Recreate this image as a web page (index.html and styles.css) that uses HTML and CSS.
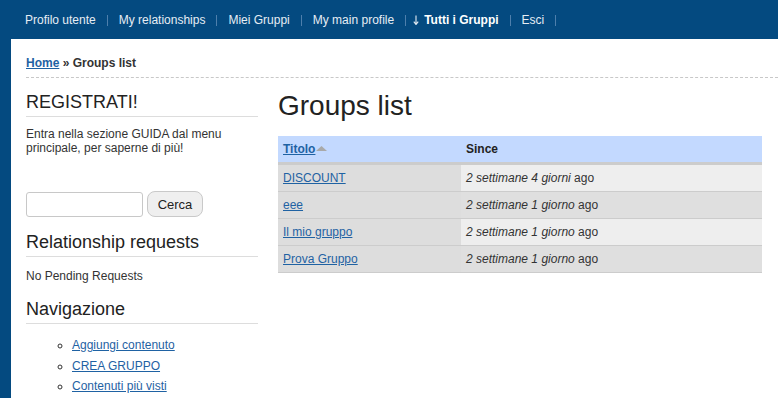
FILE: index.html
```html
<!DOCTYPE html>
<html lang="it">
<head>
<meta charset="utf-8">
<title>Groups list</title>
<link rel="stylesheet" href="styles.css">
</head>
<body>
<header class="topbar">
  <ul class="menu">
    <li class="menu-item"><a href="#">Profilo utente</a></li>
    <li class="menu-item"><a href="#">My relationships</a></li>
    <li class="menu-item"><a href="#">Miei Gruppi</a></li>
    <li class="menu-item"><a href="#">My main profile</a></li>
    <li class="menu-item menu-item-active"><svg class="trail-arrow" width="6" height="10" viewBox="0 0 6 10"><path d="M3 0.5V9.3M0.8 6.6L3 9.5L5.2 6.6" fill="none" stroke="#e4ebf2" stroke-width="1.1"/></svg><a href="#">Tutti i Gruppi</a></li>
    <li class="menu-item"><a href="#">Esci</a></li>
  </ul>
</header>
<div class="page">
  <div class="breadcrumb"><a href="#">Home</a> » Groups list</div>
  <div class="columns">
    <aside class="sidebar">
      <h2 class="block-title">REGISTRATI!</h2>
      <p class="block-text">Entra nella sezione GUIDA dal menu principale, per saperne di più!</p>
      <form class="search-form">
        <input class="search-input" type="text" aria-label="Cerca">
        <button class="search-button" type="button">Cerca</button>
      </form>
      <h2 class="block-title block-title-spaced">Relationship requests</h2>
      <p class="block-note">No Pending Requests</p>
      <h2 class="block-title block-title-nav">Navigazione</h2>
      <ul class="nav-list">
        <li class="nav-item"><a href="#">Aggiungi contenuto</a></li>
        <li class="nav-item"><a href="#">CREA GRUPPO</a></li>
        <li class="nav-item"><a href="#">Contenuti più visti</a></li>
      </ul>
    </aside>
    <main class="main">
      <h1 class="page-title">Groups list</h1>
      <table class="groups-table">
        <thead>
          <tr>
            <th class="col-title"><a href="#">Titolo</a><svg class="sort-icon" width="11" height="5" viewBox="0 0 11 5"><polygon points="0,5 5.5,0 11,5" fill="#a9a9a9"/></svg></th>
            <th class="col-since">Since</th>
          </tr>
        </thead>
        <tbody>
          <tr class="row-odd">
            <td class="cell-active"><a href="#">DISCOUNT</a></td>
            <td><em>2 settimane 4 giorni</em> ago</td>
          </tr>
          <tr class="row-even">
            <td class="cell-active"><a href="#">eee</a></td>
            <td><em>2 settimane 1 giorno</em> ago</td>
          </tr>
          <tr class="row-odd">
            <td class="cell-active"><a href="#">Il mio gruppo</a></td>
            <td><em>2 settimane 1 giorno</em> ago</td>
          </tr>
          <tr class="row-even">
            <td class="cell-active"><a href="#">Prova Gruppo</a></td>
            <td><em>2 settimane 1 giorno</em> ago</td>
          </tr>
        </tbody>
      </table>
    </main>
  </div>
</div>
</body>
</html>
```
FILE: styles.css
```css
html, body {
  margin: 0;
  padding: 0;
}

body {
  background: #044a80;
  font-family: "Liberation Sans", Arial, sans-serif;
  font-size: 12px;
  color: #333;
}

a {
  color: #1f62a3;
}

.topbar {
  height: 39px;
}

.menu {
  display: flex;
  align-items: center;
  height: 39px;
  margin: 0;
  padding: 1px 0 0 14px;
  box-sizing: border-box;
  list-style: none;
}

.menu-item {
  height: 11px;
  line-height: 11px;
  padding: 0 11px;
  border-right: 1px solid #4e7fac;
}

.menu-item a {
  color: #e6edf4;
  text-decoration: none;
}

.menu-item-active {
  padding-left: 7px;
}

.menu-item-active a {
  color: #fff;
  font-weight: bold;
}

.trail-arrow {
  display: inline-block;
  vertical-align: -1.5px;
  margin-right: 5px;
}

.page {
  background: #fff;
  margin-left: 11px;
  padding-left: 15px;
  min-height: calc(100vh - 39px);
}

.breadcrumb {
  font-weight: bold;
  line-height: 14px;
  padding: 17px 0 7px;
  border-bottom: 1px dashed #c8c8c8;
  color: #333;
}

.columns {
  display: flex;
  gap: 20px;
  margin-top: 14px;
  padding-right: 16px;
}

.sidebar {
  width: 232px;
  flex: none;
}

.block-title {
  margin: 0;
  font-size: 18px;
  font-weight: normal;
  line-height: 21px;
  padding-bottom: 3px;
  border-bottom: 1px solid #dddddd;
  color: #222;
}

.block-text {
  margin: 10px 0 0;
  line-height: 14px;
}

.search-form {
  display: flex;
  align-items: flex-end;
  gap: 4px;
  margin: 36px 0 0;
}

.search-input {
  box-sizing: border-box;
  width: 117px;
  height: 25px;
  margin: 0;
  border: 1px solid #c8c8c8;
  border-radius: 3px;
  background: #fff;
}

.search-button {
  box-sizing: border-box;
  width: 56px;
  height: 26px;
  margin: 0;
  padding: 0;
  font-family: "Liberation Sans", Arial, sans-serif;
  font-size: 13px;
  color: #222;
  background: #efefef;
  border: 1px solid #c9c9c9;
  border-radius: 8px;
}

.block-title-spaced {
  margin-top: 15px;
}

.block-note {
  margin: 12px 0 0;
  line-height: 14px;
}

.block-title-nav {
  margin-top: 16px;
}

.nav-list {
  margin: 11px 0 0;
  padding-left: 46px;
  list-style: circle;
}

.nav-item {
  line-height: 14px;
  padding: 3px 0 3.5px;
}

.main {
  flex: 1;
  min-width: 0;
}

.page-title {
  margin: 0 0 16px;
  font-size: 28px;
  font-weight: normal;
  line-height: 28px;
  color: #222;
}

.groups-table {
  width: 100%;
  border-collapse: separate;
  border-spacing: 0;
  table-layout: fixed;
}

.groups-table th,
.groups-table td {
  text-align: left;
  line-height: 14px;
  padding: 6px 5px;
}

.groups-table th {
  background: #c3d9ff;
  border-bottom: 3px solid #cccccc;
  font-weight: bold;
  color: #222;
}

.col-title {
  box-sizing: border-box;
  width: 183px;
}

.sort-icon {
  display: inline-block;
  vertical-align: 2px;
  margin-left: 1px;
}

.groups-table td {
  border-bottom: 1px solid #cccccc;
  color: #333;
}

.row-odd td {
  background: #eeeeee;
}

.row-even td {
  background: #dfdfdf;
}

.groups-table td.cell-active {
  background: #dddddd;
}
```
